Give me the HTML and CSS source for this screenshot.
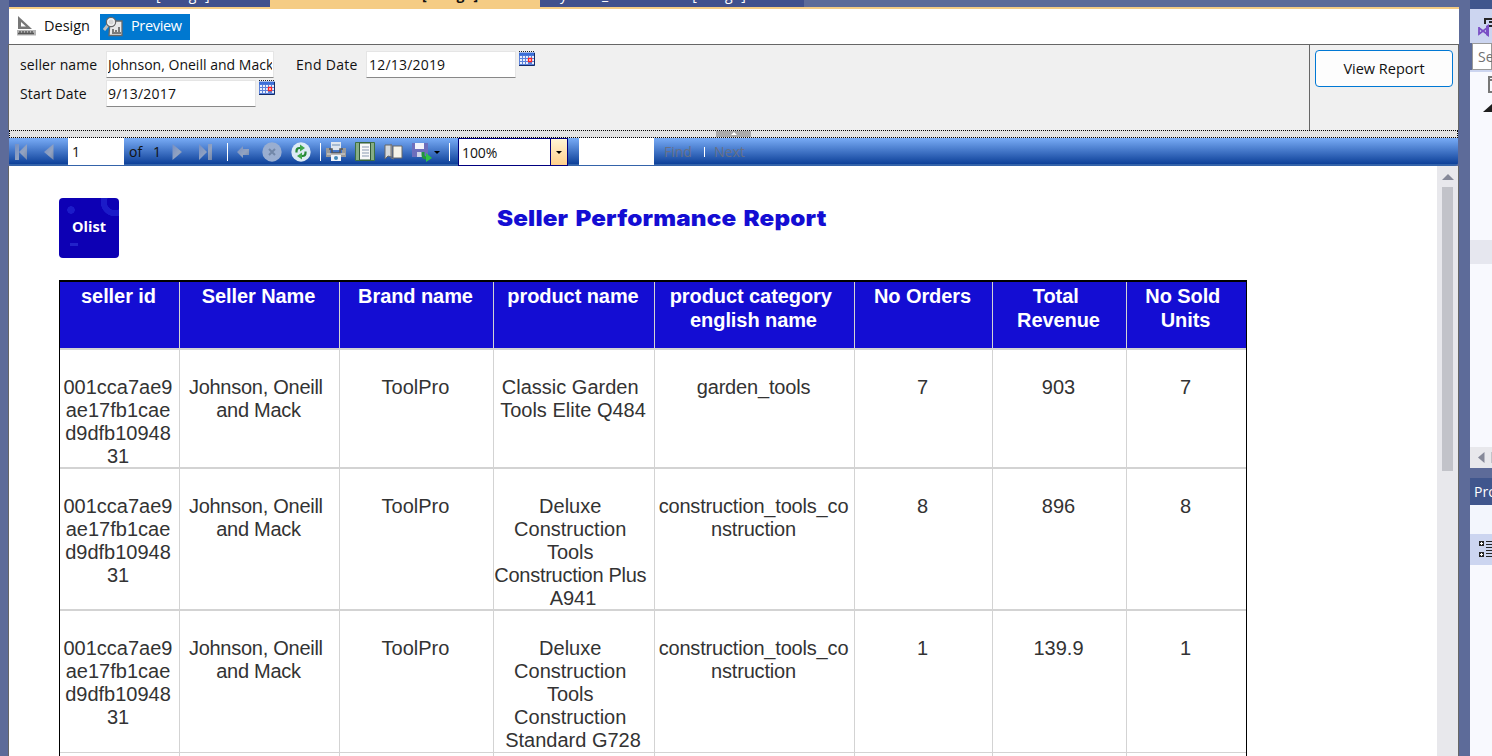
FILE: index.html
```html
<!DOCTYPE html>
<html lang="en">
<head>
<meta charset="utf-8">
<title>Seller Performance Report</title>
<link rel="stylesheet" href="styles.css">
</head>
<body>
<div class="shell">
  <main class="document">
    <nav class="tabs">
      <div class="tab tab-one"><span>[Design]</span></div>
      <div class="tab tab-active"><span>[Design]</span></div>
      <div class="tab tab-three"><span>y</span><span>_</span><span>[Design]</span></div>
    </nav>
    <div class="modes">
      <div class="mode mode-design">
        <svg width="20" height="20" viewBox="0 0 20 20"><path d="M1 0v13h14z" fill="#777"/><path d="M4 6v4.500h5z" fill="#fff"/><path d="M0 14h19v5.500H0z" fill="#b5b5b5"/><path d="M3 17v-2M6 17v-2M9 17v-2M12 17v-2M15 17v-2M1 17.500h16" stroke="#555" stroke-width="1.400"/></svg>
        <span>Design</span>
      </div>
      <div class="mode mode-preview">
        <svg width="21" height="21" viewBox="0 0 21 21"><path d="M7 5h12v14.500H6z" fill="#e8e8e8" stroke="#686868" stroke-width="1.300"/><path d="M10 16v-3M13 16v-2M16 16v-5M9 17h9" stroke="#555" stroke-width="1.500"/><path d="M5 9l-4 5" stroke="#bdbdbd" stroke-width="3"/><circle cx="8" cy="6" r="4.600" fill="#d6d6d6" stroke="#666" stroke-width="1.300"/><circle cx="8" cy="6" r="3.200" fill="none" stroke="#f4f4f4" stroke-width="1.200"/></svg>
        <span>Preview</span>
      </div>
    </div>
    <section class="parameters">
      <div class="fields">
        <div class="field-row">
          <label class="first-label seller-label">seller name</label>
          <div class="field wide"><span class="clip">Johnson, Oneill and Mack</span></div>
          <label class="end-label">End Date</label>
          <div class="field date end-date"><span>12/13/2019</span></div>
          <svg class="calendar" width="16" height="16"><use href="#calendar"/></svg>
        </div>
        <div class="field-row">
          <label class="first-label start-label">Start Date</label>
          <div class="field date"><span class="start-date">9/13/2017</span></div>
          <svg class="calendar" width="16" height="16"><use href="#calendar"/></svg>
        </div>
      </div>
      <div class="submit"><button>View Report</button></div>
    </section>
    <div class="splitter"><div class="grip"><i></i></div></div>
    <div class="toolbar">
      <svg width="14" height="18"><path d="M1 1h4v16H1zM13 1v16L5 9z" fill="url(#steel)"/></svg>
      <svg width="10" height="16"><path d="M9.500 0v16L0 8z" fill="url(#steel)"/></svg>
      <div class="page-box">1</div>
      <span>of</span>
      <span>1</span>
      <svg width="10" height="16"><path d="M.5 0v16L10 8z" fill="url(#steel)"/></svg>
      <svg width="14" height="18"><path d="M0 1v16l8-8zM9 1h4v16H9z" fill="url(#steel)"/></svg>
      <i class="sep"></i>
      <svg width="12" height="12"><path d="M0 6l6-6v3h6v6H6v3z" fill="url(#steel)"/></svg>
      <svg width="20" height="20"><circle cx="10" cy="10" r="9.700" fill="#9aaed0"/><path d="M7 7l6 6M13 7l-6 6" stroke="#7287a8" stroke-width="2"/></svg>
      <svg width="20" height="20"><circle cx="10" cy="10" r="9.700" fill="#dceaf5"/><path d="M5.500 10.500V9q0-3 3-3H10" fill="none" stroke="#258837" stroke-width="2.200"/><path d="M9 2.500l5 3.500-5 3.500z" fill="#3fa649"/><path d="M14.500 9.500V11q0 3-3 3H10" fill="none" stroke="#258837" stroke-width="2.200"/><path d="M11 10.500L6 14l5 3.500z" fill="#3fa649"/></svg>
      <i class="sep"></i>
      <svg width="20" height="20"><path d="M5 0h10v8H5z" fill="#dfe6ef"/><path d="M6 3h8" stroke="#a6bad1" stroke-width="2"/><path d="M0 6h4v5h12V6h4v9H0z" fill="#9a9a9a"/><path d="M3 7h3v4h8V7h3" fill="none" stroke="#555" stroke-width="1.500"/><path d="M1 12h18" stroke="#d9d9d9"/><path d="M5 13h10v6H5z" fill="#f1f5fa"/><circle cx="10" cy="16" r="2" fill="#438ab7"/></svg>
      <svg width="20" height="20"><path d="M.5.500h19v18H.5z" fill="#86ad86" stroke="#3e7142"/><path d="M4.500 1h11v17h-11z" fill="#f8f8f8" stroke="#315b37"/><path d="M7 5h7M7 8h7M7 11h7M7 14h7" stroke="#8999b1"/></svg>
      <svg width="20" height="18"><path d="M1 2h7v12l-4-1-3 3z" fill="#d6d9dc" stroke="#686868"/><path d="M9 3h9v12H9z" fill="#f5f3e9" stroke="#686868"/><path d="M7 1v14l3 1" fill="none" stroke="#777"/></svg>
      <svg width="20" height="19"><path d="M0 0h16v14H0z" fill="#6d6ebc"/><path d="M3 0h9v6H3z" fill="#f3f3fa"/><path d="M5 9h7v5H5z" fill="#ced2e8"/><path d="M11 9v3q0 3 4 3" fill="none" stroke="#21963c" stroke-width="3"/><path d="M14 10l6 5-6 4z" fill="#2ec246"/></svg>
      <i class="caret"></i>
      <i class="sep"></i>
      <div class="zoom"><span>100%</span><b><i class="caret"></i></b></div>
      <div class="search"></div>
      <span class="disabled">Find</span>
      <i class="sep short"></i>
      <span class="disabled">Next</span>
    </div>
    <div class="viewer">
      <article class="report">
        <header class="report-head">
          <div class="logo"><span>Olist</span></div>
          <h1>Seller Performance Report</h1>
        </header>
        <div class="table">
          <div class="row head"><div>seller id</div><div>Seller Name</div><div>Brand name</div><div>product name</div><div>product category 
english name</div><div>No Orders</div><div>Total 
Revenue</div><div>No Sold 
Units</div></div>
          <div class="row r1"><div class="sid">001cca7ae9
ae17fb1cae
d9dfb10948
31</div><div class="name">Johnson, Oneill 
and Mack</div><div>ToolPro</div><div>Classic Garden 
Tools Elite Q484</div><div class="category">garden_tools</div><div>7</div><div>903</div><div>7</div></div>
          <div class="row r2"><div class="sid">001cca7ae9
ae17fb1cae
d9dfb10948
31</div><div class="name">Johnson, Oneill 
and Mack</div><div>ToolPro</div><div>Deluxe 
Construction 
Tools 
<span class="tight">Construction Plus </span>
A941</div><div class="category">construction_tools_co
nstruction</div><div>8</div><div>896</div><div>8</div></div>
          <div class="row r2 r3"><div class="sid">001cca7ae9
ae17fb1cae
d9dfb10948
31</div><div class="name">Johnson, Oneill 
and Mack</div><div>ToolPro</div><div>Deluxe 
Construction 
Tools 
Construction 
Standard G728</div><div class="category">construction_tools_co
nstruction</div><div>1</div><div>139.9</div><div>1</div></div>
          <div class="row last"><div></div><div></div><div></div><div></div><div></div><div></div><div></div><div></div></div>
        </div>
      </article>
      <div class="scrollbar"><i class="up"></i><div class="thumb"></div></div>
    </div>
  </main>
  <aside class="side">
    <div class="side-title"></div>
    <div class="side-tools"><svg width="20" height="20"><path d="M8 2h12M8 1v6M12 5h8M12 9h8" stroke="#252526" stroke-width="2"/><path d="M2 10v7l8-6v6l-8-6" fill="none" stroke="#7a4fc5" stroke-width="1.800"/><path d="M9 9l3-2v13l-3-2z" fill="#7a4fc5"/></svg></div>
    <div class="side-search">Search</div>
    <div class="tree">
      <svg class="tree-doc" width="12" height="17"><path d="M8 1H3v15h8M3 4h8" fill="none" stroke="#777" stroke-width="2"/></svg>
      <svg class="tree-open" width="9" height="9"><path d="M9 0v8H0z" fill="#1e1e1e"/></svg>
      <div class="selected"></div>
    </div>
    <div class="side-scroll"><svg width="7" height="12"><path d="M6.500 0v11L0 5.500z" fill="#868999"/></svg><i></i></div>
    <div class="prop-title">Properties</div>
    <div class="prop-object"></div>
    <div class="prop-tools"><svg width="13" height="17"><path d="M0 0h5v5H0zM0 11h5v5H0z" fill="#252526"/><path d="M1 2.500h3M2.500 1v3M1 13.500h3M2.500 12v3" stroke="#fff"/><path d="M7 .5h6M7 3.500h6M7 6.500h6M7 9.500h6M7 12.500h6M7 15.500h6" stroke="#252526"/></svg></div>
    <div class="prop-grid"></div>
  </aside>
</div>
<svg width="0" height="0" class="defs"><defs><linearGradient id="steel" x1="0" y1="0" x2="1" y2="1"><stop offset="0" stop-color="#7690c4"/><stop offset=".6" stop-color="#93a3c0"/><stop offset="1" stop-color="#7486a8"/></linearGradient><symbol id="calendar" viewBox="0 0 16 16"><path d="M0 1.500h16v13H0z" fill="#5b82da"/><path d="M0 2h16v2.500H0z" fill="#3b6fd8"/><path d="M0 .5h16" stroke="#222" stroke-dasharray="1 1"/><path d="M1 5h2v2H1zM4 5h2v2H4zM7 5h2v2H7zM10 5h2v2h-2zM13 5h2v2h-2zM1 8h2v2H1zM4 8h2v2H4zM7 8h2v2H7zM1 11h2v2H1zM4 11h2v2H4zM7 11h2v2H7zM13 8h2v2h-2zM13 11h2v2h-2z" fill="#e9effc"/><path d="M9.500 7.500h3v3h-3z" fill="#fff" stroke="#f22" stroke-width="1.300"/><path d="M0 14.500h15.500V2" fill="none" stroke="#142c68"/></symbol></defs></svg>
</body>
</html>
```
FILE: styles.css
```css
* { box-sizing: border-box; }
body { margin: 0; width: 1492px; height: 756px; overflow: hidden; background: #5d6b99; font: 14px/20px "Open Sans", "Noto Sans", sans-serif; color: #111; }
svg { display: block; flex: none; }
.defs { position: absolute; }
.shell { display: flex; height: 756px; }
.document { width: 1451px; margin-left: 8px; display: flex; flex-direction: column; flex: none; }

.tabs { height: 9px; border-bottom: 2px solid #f5cc84; display: flex; overflow: hidden; flex: none; margin-left: 1px; }
.tab { height: 7px; background: #40508d; color: #fff; overflow: hidden; line-height: 20px; }
.tab span { display: block; margin-top: -15px; }
.tab-one { width: 261px; padding-left: 147px; }
.tab-active { width: 270px; padding-left: 152px; background: #f5cc84; color: #111; font-weight: 700; }
.tab-three { width: 264px; padding-left: 20px; display: flex; }
.tab-three span:nth-child(2) { margin-left: 35px; }
.tab-three span:nth-child(3) { margin-left: 84px; }

.modes { height: 35px; flex: none; background: #fff; margin-left: 1px; display: flex; padding: 5px 0 4px 5px; font-size: 14.5px; }
.mode { display: flex; align-items: center; height: 26px; padding-bottom: 2px; }
.mode-design { width: 86px; padding-left: 3px; gap: 7px; }
.mode-preview { width: 90px; background: #0078d0; color: #fff; padding-left: 3px; gap: 7px; letter-spacing: -.35px; }

.parameters { height: 86px; flex: none; background: #f0f0f0; border-top: 1px solid #666; border-left: 1px solid #666; border-right: 1px solid #666; display: flex; }
.fields { width: 1300px; padding: 6px 0 0 11px; }
.field-row { height: 29px; display: flex; align-items: flex-start; }
.first-label { width: 86px; letter-spacing: .12px; }
label { padding-top: 4px; white-space: nowrap; }
.field { height: 27px; background: #fff; border: 1px solid #e5e5e5; border-bottom-color: #888; white-space: nowrap; overflow: hidden; padding: 3px 1px; letter-spacing: .2px; }
.wide { width: 168px; }
.clip { display: block; overflow: hidden; letter-spacing: .02px; }
.date { width: 150px; }
.end-label { margin-left: 22px; width: 70px; letter-spacing: .3px; }
.calendar { margin: 0 0 0 3px; }
.end-date { padding-left: 2px; }
.submit { flex: 1; border-left: 1px solid #666; padding: 5px 0 0 5px; }
.submit button { width: 138px; height: 37px; background: #fdfdfd; border: 1px solid #0078d4; border-radius: 4px; font: 14.500px "Open Sans", sans-serif; color: #111; padding: 0; }
.splitter { height: 8px; flex: none; background: #e3e3e3; border: 1px dotted #000; display: flex; margin-left: 1px; margin-right: 1px; }
.grip { width: 35px; height: 6px; background: #aaa; margin-left: 706px; display: flex; justify-content: center; }
.grip i { margin-top: 1px; width: 6px; height: 0; border: 3px solid transparent; border-top: 0; border-bottom: 3px solid #fff; }

.toolbar { height: 28px; flex: none; margin-left: 1px; margin-right: 1px; background: linear-gradient(#79acf6, #0c3f98 94%, #3463aa 94%); display: grid; align-items: center; border-radius: 0 0 4px 2px; grid-template-columns: 30px 24px 61px 24px 19px 27px 28px 10px 25px 29px 29px 6px 29px 29px 28px 22px 15px 9px 121px 85px 40px 10px 60px; padding-left: 5px; }
.page-box { width: 56px; height: 27px; background: #fff; padding: 4px; align-self: start; }
.sep { width: 1px; height: 18px; background: #fff; }
.short { height: 10px; }
.caret { width: 0; height: 0; border: 3px solid transparent; border-top-color: #000; border-bottom: 0; }
.zoom { width: 110px; height: 28px; border: 1px solid #000080; background: #fff; display: flex; align-items: center; }
.zoom span { flex: 1; padding: 1px 0 0 3px; letter-spacing: -.1px; }
.zoom b { width: 17px; height: 26px; border-left: 1px solid #000080; background: linear-gradient(#fff5d5, #ffd08c); display: flex; align-items: center; justify-content: center; }
.search { width: 75px; height: 27px; background: #fff; align-self: start; }
.disabled { color: #667086; }

.viewer { flex: 1; min-height: 0; background: #fff; border-left: 1px solid #666; border-right: 1px solid #666; display: flex; overflow: hidden; }
.report { width: 1428px; padding: 32px 0 0 50px; }
.report-head { height: 82px; display: flex; align-items: flex-start; }
.logo { width: 60px; height: 60px; border-radius: 4px; color: #fff; display: flex; align-items: center; justify-content: center; font: 700 14.500px/20px "Open Sans", sans-serif; padding-bottom: 2px; background: radial-gradient(circle at 12px 12px, #1b1bc8 3.500px, transparent 4px), radial-gradient(circle at 56px 4px, transparent 8px, #1b1bc8 8.500px 14px, transparent 14.500px), linear-gradient(#2222ca, #2222ca) 11px 45px / 8px 3px no-repeat, #0d00b4; }
h1 { margin: 5px 0 0 378px; font: 900 22px/30px Inter, sans-serif; color: #140dd3; white-space: nowrap; transform: scaleX(1.1); transform-origin: left; letter-spacing: .15px; word-spacing: 2px; }
.table { width: 1188px; border: 1px solid #000; border-top-width: 2px; border-bottom: 0; font: 20px/23px "Liberation Sans", Arial, sans-serif; color: #333; }
.row { display: grid; grid-template-columns: 120px 160px 154px 161px 200px 138px 134px 119px; border-bottom: 2px solid #d3d3d3; }
.row > div { border-right: 1px solid #d3d3d3; text-align: center; white-space: pre; padding: 26px 2px 0 0; overflow: hidden; }
.row > .sid { padding-right: 3px; }
.row > div:last-child { border-right: 0; }
.row > .name { letter-spacing: -.27px; }
.row > .category { letter-spacing: -.18px; }
.tight { letter-spacing: -.28px; }
.row.head { height: 68px; background: #140dd3; color: #fff; font-weight: 700; line-height: 24px; letter-spacing: -.08px; }
.row.head > div { padding-top: 2px; }
.r1 { height: 119px; }
.r2 { height: 142px; }
.r3 { border-bottom-width: 1px; }
.last { height: 30px; }
.scrollbar { width: 21px; background: #e8e8ec; display: flex; flex-direction: column; align-items: center; padding-top: 8px; }
.up { border: 6px solid transparent; border-top: 0; border-bottom: 6px solid #868999; }
.thumb { width: 11px; height: 284px; background: #c2c3c9; margin-top: 7px; }

.side { width: 22px; margin-left: 11px; flex: none; display: flex; flex-direction: column; overflow: hidden; background: #5d6b99; }
.side > div { flex: none; }
.side-title { height: 9px; background: #40568d; }
.side-tools { height: 34px; background: #ccd5f0; padding: 8px 0 0 7px; }
.side-search { height: 27px; margin-left: 2px; border: 1px solid #999; background: #fff; padding: 3px 5px; color: #717171; }
.side-search, .prop-title { white-space: nowrap; }
.tree { height: 377px; background: #f8f9fe; border-top: 2px solid #ccd5f0; }
.tree-doc { margin: 4px 0 0 16px; }
.tree-open { margin: 11px 0 0 13px; }
.selected { height: 24px; background: #e6e7ef; margin-top: 127px; }
.side-scroll { height: 21px; background: #e8e8ec; padding: 5px 0 0 8px; display: flex; gap: 6px; }
.side-scroll i { width: 2px; height: 11px; background: #c2c3c9; }
.prop-title { margin-top: 10px; height: 27px; background: #40568d; color: #fff; padding: 4px 4px; }
.prop-object { height: 29px; background: #f3f6fd; }
.prop-tools { height: 31px; background: #ccd5f0; padding: 7px 0 0 9px; }
.prop-grid { height: 191px; background: #f8f9fe; }
```
